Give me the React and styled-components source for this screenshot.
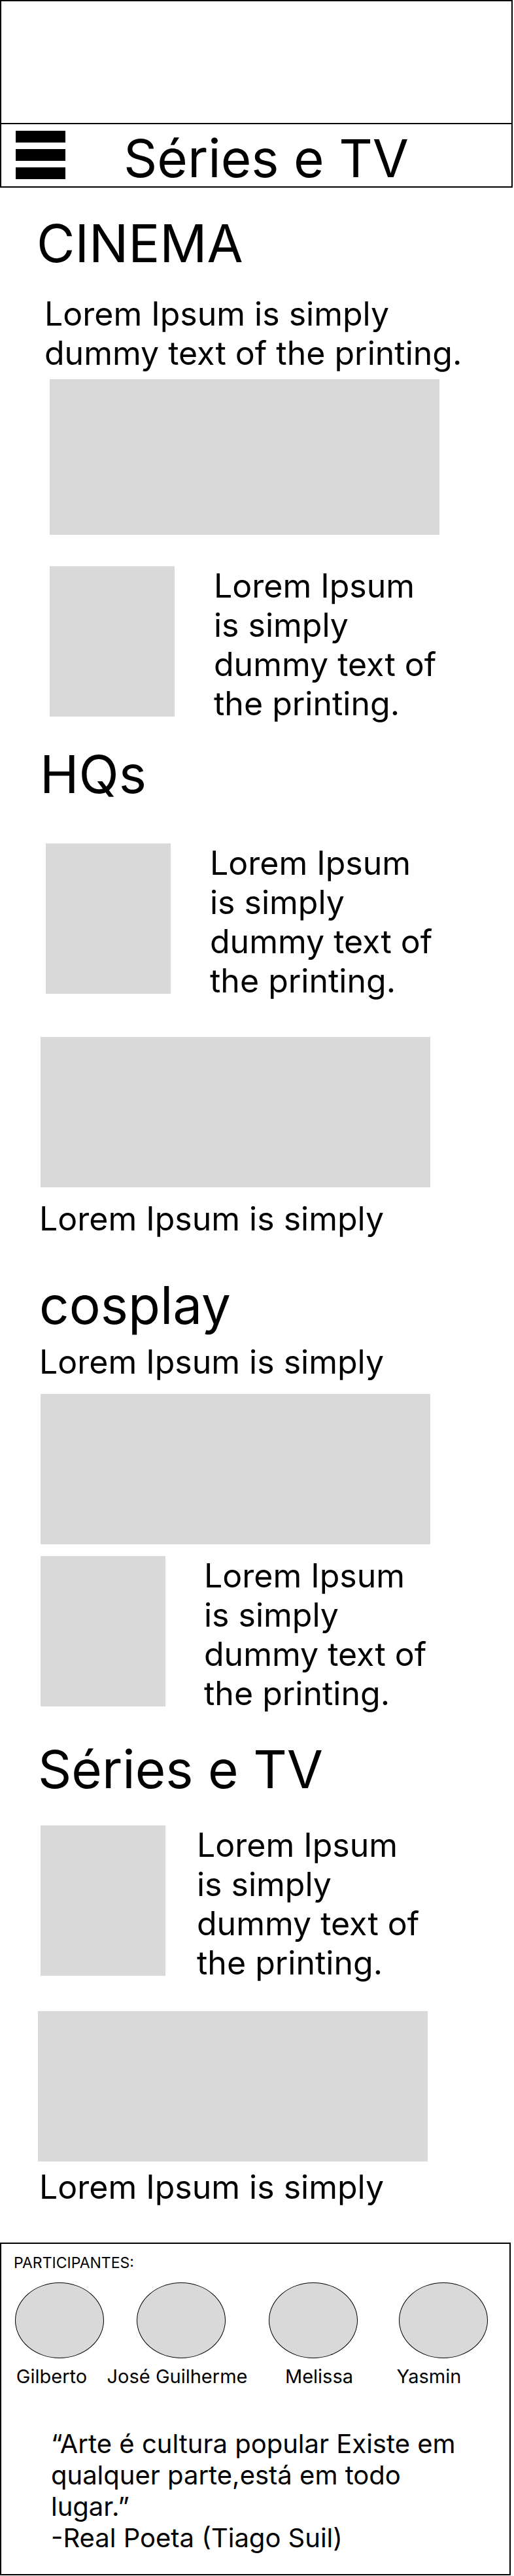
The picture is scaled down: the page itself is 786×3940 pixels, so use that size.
import React from 'react';
import styled, {createGlobalStyle} from 'styled-components';

const GlobalStyle = createGlobalStyle`
    * {
        box-sizing: border-box;
    }
    html, body {
        margin: 0;
        padding: 0;
        background: #fff;
    }
    body {
        font-family: Inter, "Noto Sans", "Liberation Sans", sans-serif;
        color: #000;
    }
`;

const Page = styled.div`
    width: 786px;
    display: flex;
    flex-direction: column;
    align-items: flex-start;
`;

const Header = styled.header`
    width: 784px;
    border: 2px solid #000;
    display: flex;
    flex-direction: column;
`;

const Banner = styled.div`
    height: 188px;
    border-bottom: 2px solid #000;
`;

const Nav = styled.nav`
    height: 95px;
    display: flex;
    align-items: flex-start;
    gap: 89px;
    padding-left: 22px;
`;

const Burger = styled.div`
    display: flex;
    flex-direction: column;
    gap: 10px;
    margin-top: 10px;
`;

const BurgerBar = styled.span`
    display: block;
    width: 76px;
    height: 18px;
    background: #000;
`;

const NavTitle = styled.div`
    margin-top: 3px;
    font-size: 80px;
    line-height: 97px;
    white-space: nowrap;
`;

const Heading = styled.h2`
    margin: ${p => p.$mt}px 0 0 ${p => p.$ml}px;
    font-size: 80px;
    font-weight: 400;
    line-height: 97px;
    white-space: nowrap;
`;

const Text = styled.p`
    margin: ${p => p.$mt}px 0 0 ${p => p.$ml}px;
    width: ${p => p.$w || 660}px;
    font-size: 50px;
    font-weight: 400;
    line-height: 60px;
`;

const Picture = styled.div`
    flex-shrink: 0;
    width: 596px;
    height: ${p => p.$h || 230}px;
    margin: ${p => p.$mt}px 0 0 ${p => p.$ml}px;
    background: #d9d9d9;
`;

const Feature = styled.div`
    display: flex;
    align-items: flex-start;
    gap: ${p => p.$gap}px;
    margin: ${p => p.$mt}px 0 0 ${p => p.$ml}px;
`;

const Thumb = styled.div`
    flex-shrink: 0;
    width: 191px;
    height: 230px;
    background: #d9d9d9;
`;

const FeatureText = styled.p`
    margin: 0;
    width: 345px;
    font-size: 50px;
    font-weight: 400;
    line-height: 60px;
`;

const Footer = styled.footer`
    width: 781px;
    margin-top: 55px;
    border: 2px solid #000;
    padding: 15px 0 31px 19px;
    display: flex;
    flex-direction: column;
    align-items: flex-start;
`;

const Label = styled.div`
    font-size: 23px;
    line-height: 28px;
`;

const Participants = styled.div`
    display: grid;
    grid-template-columns: 186px 202px 199px 136px;
    margin: 16px 0 0 2px;
`;

const Participant = styled.div`
    width: 136px;
    display: flex;
    flex-direction: column;
    align-items: center;
`;

const Avatar = styled.div`
    width: 136px;
    height: 116px;
    border-radius: 50%;
    border: 1.5px solid #000;
    background: #d9d9d9;
`;

const Name = styled.span`
    margin-top: 10px;
    font-size: 29px;
    line-height: 35px;
    white-space: nowrap;
    transform: translateX(${p => p.$shift}px);
`;

const Quote = styled.p`
    margin: 62px 0 0 57px;
    width: 630px;
    font-size: 40px;
    font-weight: 400;
    line-height: 48px;
`;

const lorem = 'Lorem Ipsum is simply dummy text of the printing.';
const short = 'Lorem Ipsum is simply';

const people = [
    {name: 'Gilberto', shift: -12},
    {name: 'José Guilherme', shift: -6},
    {name: 'Melissa', shift: 9},
    {name: 'Yasmin', shift: -22},
];

function App(){
    return (
        <Page>
            <GlobalStyle />
            <Header>
                <Banner />
                <Nav>
                    <Burger>
                        <BurgerBar />
                        <BurgerBar />
                        <BurgerBar />
                    </Burger>
                    <NavTitle>Séries e TV</NavTitle>
                </Nav>
            </Header>

            <Heading $mt={36} $ml={56}>CINEMA</Heading>
            <Text $mt={30} $ml={68}>{lorem}</Text>
            <Picture $mt={10} $ml={76} $h={238} />
            <Feature $mt={48} $ml={76} $gap={60}>
                <Thumb />
                <FeatureText>{lorem}</FeatureText>
            </Feature>

            <Heading $mt={29} $ml={61}>HQs</Heading>
            <Feature $mt={58} $ml={70} $gap={60}>
                <Thumb />
                <FeatureText>{lorem}</FeatureText>
            </Feature>
            <Picture $mt={56} $ml={62} />
            <Text $mt={18} $ml={60}>{short}</Text>

            <Heading $mt={53} $ml={60}>cosplay</Heading>
            <Text $mt={9} $ml={60}>{short}</Text>
            <Picture $mt={19} $ml={62} />
            <Feature $mt={18} $ml={62} $gap={59}>
                <Thumb />
                <FeatureText>{lorem}</FeatureText>
            </Feature>

            <Heading $mt={37} $ml={58}>Séries e TV</Heading>
            <Feature $mt={38} $ml={62} $gap={48}>
                <Thumb />
                <FeatureText>{lorem}</FeatureText>
            </Feature>
            <Picture $mt={44} $ml={58} />
            <Text $mt={9} $ml={60}>{short}</Text>

            <Footer>
                <Label>PARTICIPANTES:</Label>
                <Participants>
                    {people.map(p => (
                        <Participant key={p.name}>
                            <Avatar />
                            <Name $shift={p.shift}>{p.name}</Name>
                        </Participant>
                    ))}
                </Participants>
                <Quote>
                    “Arte é cultura popular Existe em qualquer parte,está em todo lugar.”
                    <br />
                    -Real Poeta (Tiago Suil)
                </Quote>
            </Footer>
        </Page>
    );
}

export default App;
